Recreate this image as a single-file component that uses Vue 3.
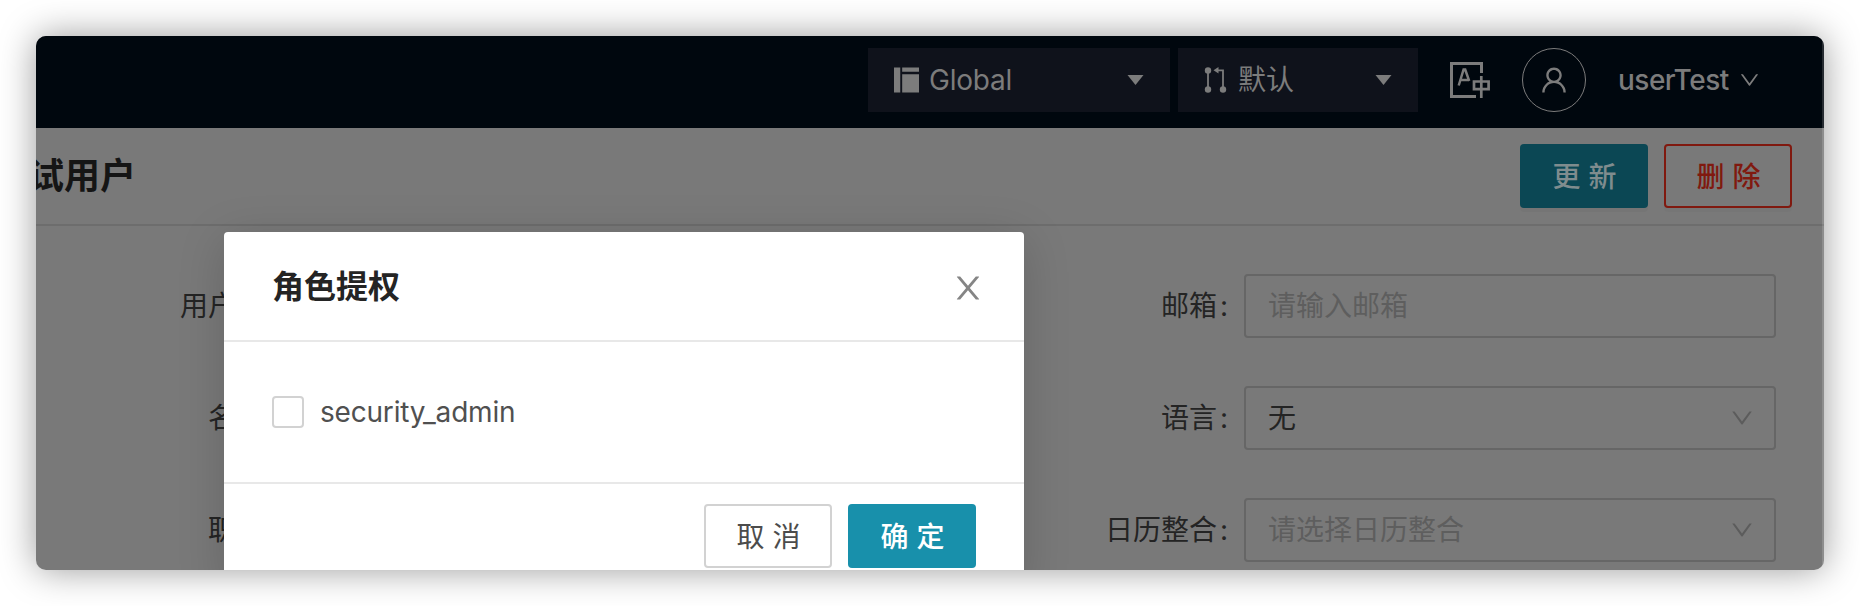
<script setup>
const downPath = 'M884 256h-75c-5.1 0-9.9 2.5-12.9 6.6L512 654.2 227.9 262.6c-3-4.1-7.8-6.6-12.9-6.6h-75c-6.5 0-10.3 7.4-6.5 12.7l352.6 486.1c12.8 17.6 39 17.6 51.7 0l352.6-486.1c3.9-5.3.1-12.7-6.4-12.7z'
const leftLabels = ['用户', '名', '职']
const fields = [
  { label: '邮箱', text: '请输入邮箱', placeholder: true, select: false },
  { label: '语言', text: '无', placeholder: false, select: true },
  { label: '日历整合', text: '请选择日历整合', placeholder: true, select: true },
]
</script>

<template>
  <div class="stage">
    <div class="window">
      <header class="topbar">
        <div class="picker picker-org">
          <svg class="org-icon" viewBox="0 0 26 26"><path d="M0 0h6.5v26H0zM8.5 0H26v4.5H8.5zM8.5 7H26v19H8.5z" /></svg>
          <span class="picker-text latin">Global</span>
          <svg class="caret" viewBox="0 0 16 10"><path d="M0 0h16L8 10z" /></svg>
        </div>
        <div class="picker picker-env">
          <svg class="env-icon" viewBox="0 0 24 28">
            <g fill="none" stroke="currentColor" stroke-width="1.8"><path d="M4 4v20M12 4.3h7v20" /></g>
            <circle cx="4" cy="4.5" r="3.2" /><circle cx="4" cy="23.5" r="3.2" /><circle cx="19" cy="23.5" r="3.2" /><path d="M9.5 4.3L14.5 1v6.6z" />
          </svg>
          <span class="picker-text">默认</span>
          <svg class="caret" viewBox="0 0 16 10"><path d="M0 0h16L8 10z" /></svg>
        </div>
        <svg class="lang" viewBox="0 0 40 36" fill="none" stroke="currentColor" stroke-width="3">
          <path d="M31.5 11V1.5H1.5v33H26" />
          <path d="M8.7 23.5L13.6 7.5h1.6l4 11.5M11 18h8" stroke-width="2.5" />
          <path d="M24 19.5h14.6v7.6H24zM31.3 14v22" stroke-width="2.7" />
        </svg>
        <div class="avatar">
          <svg viewBox="0 0 1024 1024"><path d="M858.5 763.6a374 374 0 0 0-80.6-119.5 375.63 375.63 0 0 0-119.5-80.6c-.4-.2-.8-.3-1.2-.5C719.5 518 760 444.7 760 362c0-137-111-248-248-248S264 225 264 362c0 82.7 40.5 156 102.8 201.1-.4.2-.8.3-1.2.5-44.8 18.9-85 46-119.5 80.6a375.63 375.63 0 0 0-80.6 119.5A371.7 371.7 0 0 0 136 901.8a8 8 0 0 0 8 8.2h60c4.4 0 7.9-3.5 8-7.8 2-77.2 33-149.5 87.8-204.3 56.7-56.7 132-87.9 212.2-87.9s155.5 31.2 212.2 87.9C779 752.7 810 825 812 902.2c.1 4.4 3.6 7.8 8 7.8h60a8 8 0 0 0 8-8.2c-1-47.8-10.9-94.3-29.5-138.2zM512 534c-45.9 0-89.1-17.9-121.6-50.4S340 407.9 340 362c0-45.9 17.9-89.1 50.4-121.6S466.1 190 512 190s89.1 17.9 121.6 50.4S684 316.1 684 362c0 45.9-17.9 89.1-50.4 121.6S557.9 534 512 534z" /></svg>
        </div>
        <span class="user latin">userTest</span>
        <svg class="user-down" viewBox="0 0 1024 1024"><path :d="downPath" /></svg>
      </header>

      <section class="titlebar">
        <h1>试用户</h1>
        <div class="btn btn-update">更新</div>
        <div class="btn btn-delete">删除</div>
      </section>

      <main class="form">
        <div class="col-left">
          <div v-for="l in leftLabels" :key="l" class="row">{{ l }}</div>
        </div>
        <div class="col-right">
          <div v-for="f in fields" :key="f.label" class="row">
            <label>{{ f.label }}<span class="colon">:</span></label>
            <div class="control">
              <span :class="{ placeholder: f.placeholder }">{{ f.text }}</span>
              <svg v-if="f.select" viewBox="0 0 1024 1024"><path :d="downPath" /></svg>
            </div>
          </div>
        </div>
      </main>

      <div class="modal">
        <div class="modal-head">
          <h2>角色提权</h2>
          <svg viewBox="0 0 1024 1024"><path d="M563.8 512l262.5-312.9c4.4-5.2.7-13.1-6.1-13.1h-79.8c-4.7 0-9.2 2.1-12.3 5.7L511.6 449.8 295.1 191.7c-3-3.6-7.5-5.7-12.3-5.7H203c-6.8 0-10.5 7.9-6.1 13.1L459.4 512 196.9 824.9A7.95 7.95 0 0 0 203 838h79.8c4.7 0 9.2-2.1 12.3-5.7l216.5-258.1 216.5 258.1c3 3.6 7.5 5.7 12.3 5.7h79.8c6.8 0 10.5-7.9 6.1-13.1L563.8 512z" /></svg>
        </div>
        <div class="modal-body">
          <span class="checkbox"></span>
          <span class="role latin">security_admin</span>
        </div>
        <div class="modal-foot">
          <div class="btn btn-cancel">取消</div>
          <div class="btn btn-ok">确定</div>
        </div>
      </div>
      <div class="edge"></div>
    </div>
  </div>
</template>

<style>
body { background: #fff; }
</style>

<style scoped>
.stage {
  box-sizing: border-box;
  width: 1860px;
  height: 606px;
  padding: 36px;
  overflow: hidden;
  font: 28px/44px Inter, "Noto Sans CJK SC", sans-serif;
}
.stage * { box-sizing: border-box; }
svg { display: block; fill: currentColor; flex: none; }
.window {
  position: relative;
  height: 534px;
  border-radius: 10px;
  overflow: hidden;
  background: #797979;
  box-shadow: 0 0 36px rgba(0, 0, 0, 0.4);
}
.topbar {
  display: flex;
  align-items: center;
  height: 92px;
  padding: 8px 0 12px 832px;
  background: #00070e;
  color: #7c7c7c;
}
.topbar > * { flex: none; }
.latin { letter-spacing: -0.2px; }
.lang[fill="none"] { fill: none; }
.picker {
  display: flex;
  align-items: center;
  height: 64px;
  padding: 0 26px;
  background: #0f121b;
  margin-right: 8px;
}
.picker-org { width: 302px; }
.picker-env { width: 240px; margin-right: 32px; }
.org-icon { width: 25px; height: 26px; }
.env-icon { width: 24px; height: 28px; }
.picker-text { margin-left: 10px; white-space: nowrap; }
.caret { width: 17px; height: 10px; margin-left: auto; }
.lang { width: 40px; height: 36px; }
.avatar {
  display: flex;
  align-items: center;
  justify-content: center;
  width: 64px;
  height: 64px;
  margin-left: 32px;
  border: 1.5px solid #7c7c7c;
  border-radius: 50%;
}
.avatar svg { width: 32px; height: 32px; }
.user { width: 112px; margin-left: 32px; white-space: nowrap; font-weight: 500; letter-spacing: -0.5px; }
.user-down { width: 23px; height: 24px; margin-left: 8px; }
.titlebar {
  display: flex;
  align-items: center;
  height: 98px;
  padding: 0 32px 0 0;
  border-bottom: 2px solid #6d6d6d;
}
h1 {
  margin: 0 auto 0 -8px;
  font-size: 36px;
  font-weight: 700;
  color: #151515;
}
.btn {
  display: flex;
  align-items: center;
  justify-content: center;
  width: 128px;
  height: 64px;
  padding: 2px 0 0 9px;
  border: 2px solid transparent;
  border-radius: 4px;
  letter-spacing: 8px;
  margin-left: 16px;
}
.btn-update { background: #0b4754; color: #7f8c8e; box-shadow: 0 4px 0 rgba(0, 0, 0, 0.03); }
.btn-delete { border-color: #80190f; color: #80190f; box-shadow: 0 4px 0 rgba(0, 0, 0, 0.02); }
.btn-update, .btn-delete, .btn-ok { font-weight: 500; }
.form { display: flex; justify-content: space-between; padding: 48px 48px 0 0; color: #242424; }
.row { display: flex; align-items: center; justify-content: flex-end; height: 64px; margin-bottom: 48px; }
.col-left { width: 200px; }
.colon { display: inline-block; width: 8px; margin: 0 16px 0 3px; text-align: center; }
.control {
  display: flex;
  align-items: center;
  justify-content: space-between;
  width: 532px;
  height: 64px;
  padding: 0 19px 0 22px;
  border: 2px solid #666;
  border-radius: 4px;
}
.control svg { width: 26px; height: 26px; color: #5c5c5c; }
.placeholder { color: #5e5e5e; }
.modal {
  position: absolute;
  left: 188px;
  top: 196px;
  width: 800px;
  height: 356px;
  background: #fff;
  border-radius: 4px 4px 0 0;
  box-shadow: 0 8px 48px rgba(0, 0, 0, 0.16);
}
.modal-head {
  display: flex;
  align-items: center;
  justify-content: space-between;
  height: 110px;
  padding: 0 38px 0 48px;
  border-bottom: 2px solid #e8e8e8;
}
h2 { margin: 2px 0 0; font-size: 32px; font-weight: 600; color: #242424; }
.modal-head svg { width: 36px; height: 36px; margin-top: 4px; color: #858585; }
.modal-body { display: flex; align-items: center; height: 140px; padding: 0 48px; }
.checkbox { width: 32px; height: 32px; border: 2px solid #d2d2d2; border-radius: 4px; }
.role { margin-left: 16px; color: #505050; }
.modal-foot {
  display: flex;
  justify-content: flex-end;
  padding: 20px 48px;
  border-top: 2px solid #e8e8e8;
}
.btn-cancel { border-color: #d2d2d2; color: #4c4c4c; }
.btn-ok { background: #1890ab; color: #fff; }
.edge {
  position: absolute;
  top: 0;
  right: 0;
  width: 2px;
  height: 100%;
  background: rgba(255, 255, 255, 0.15);
}
</style>
